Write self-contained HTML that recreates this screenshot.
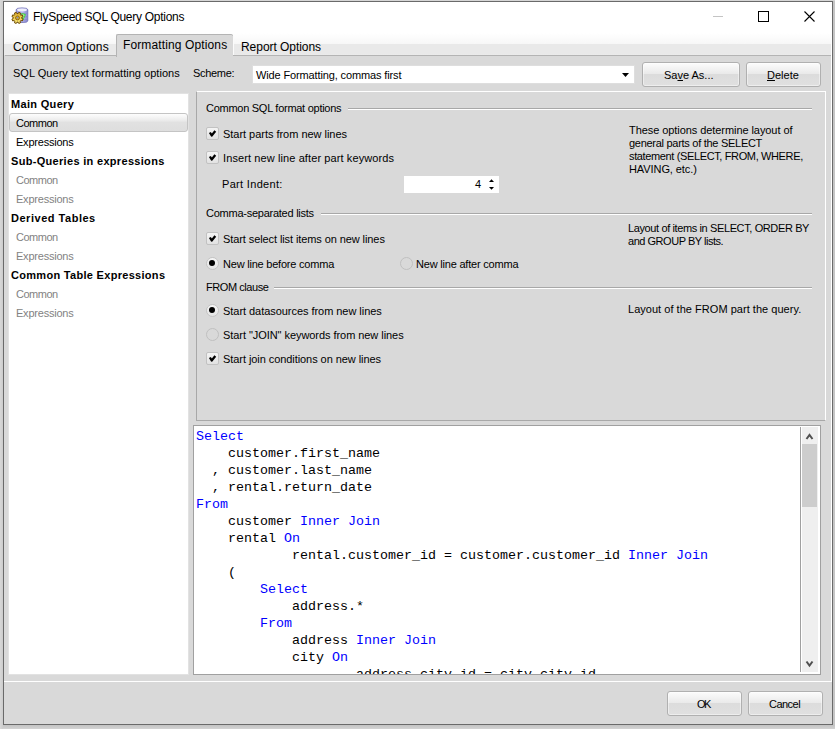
<!DOCTYPE html>
<html><head><meta charset="utf-8">
<style>
*{box-sizing:border-box}
html,body{margin:0;padding:0;width:835px;height:729px;overflow:hidden;background:#c5c5c5}
body{position:relative;font-family:"Liberation Sans",sans-serif;font-size:11px;color:#000}
.a{position:absolute}
.t{position:absolute;white-space:nowrap;font-size:11px;line-height:13px}
.win{position:absolute;left:3px;top:1px;width:830px;height:724px;border:1px solid #6a6a6a;background:#d9d9d9}
.title{position:absolute;left:4px;top:2px;width:828px;height:31px;background:#fff}
.strip{position:absolute;left:4px;top:33px;width:827px;height:22px;background:linear-gradient(#fff 0,#f7f7f7 11px,#e9e9e9 11px,#e9e9e9 21px,#ececec 22px)}
.btn{position:absolute;border:1px solid #b0b0b0;border-radius:3px;background:linear-gradient(#fcfcfc 0%,#eaeaea 46%,#dcdcdc 50%,#e0e0e0 100%);box-shadow:inset 0 0 0 1px rgba(255,255,255,.45)}
.cb{position:absolute;width:13px;height:13px;border:1px solid #c2c2c2;border-radius:2px;background:linear-gradient(#f4f4f4,#e2e2e2)}
.rb{position:absolute;width:13px;height:13px;border:1px solid #c4c4c4;border-radius:50%;background:linear-gradient(#f6f6f6,#e4e4e4)}
.rb.off{background:transparent;border-color:#c0c0c0}
.dis{color:#828282}
.code{position:absolute;font-family:"Liberation Mono",monospace;font-size:13.333px;line-height:17px;white-space:pre;color:#000}
.k{color:#0000ff}
</style></head><body>
<div class="a" style="left:0;top:0;width:3px;height:729px;background:linear-gradient(90deg,#d8d8d8,#cccccc)"></div>
<div class="a" style="left:0;top:0;width:835px;height:1px;background:#d6d6d6"></div>
<div class="a" style="left:3px;top:725px;width:832px;height:4px;background:linear-gradient(#c3c3c3,#d3d3d3)"></div>
<div class="win"></div>
<div class="title"></div>
<!-- outer frame right-side white column -->
<div class="a" style="left:831px;top:2px;width:1px;height:680px;background:#fff"></div>
<div class="strip"></div>
<div class="a" style="left:5px;top:55px;width:826px;height:1px;background:#b4b4b4"></div>

<!-- title icon -->
<svg class="a" style="left:0;top:0" width="30" height="30" viewBox="0 0 30 30">
  <defs><linearGradient id="db" x1="0" x2="1"><stop offset="0" stop-color="#9090d4"/><stop offset=".5" stop-color="#b8b8ec"/><stop offset="1" stop-color="#8a8ad0"/></linearGradient>
  <linearGradient id="gr" x1="0" y1="0" x2="0" y2="1"><stop offset="0" stop-color="#e2b02a"/><stop offset="1" stop-color="#fbea7a"/></linearGradient></defs>
  <path d="M16.2 9.6 Q16.2 7.9 22 7.9 Q27.8 7.9 27.8 9.6 V20.9 Q27.8 22.5 22 22.5 Q16.2 22.5 16.2 20.9Z" fill="url(#db)" stroke="#6a6ab4" stroke-width="0.8"/>
  <ellipse cx="22" cy="10" rx="5" ry="1.4" fill="#eeeefc"/>
  <path d="M16.6 13.6 Q22 15 27.4 13.6 M16.6 16.6 Q22 18 27.4 16.6 M16.6 19.6 Q22 21 27.4 19.6" stroke="#8080c4" stroke-width="0.7" fill="none"/>
  <path d="M21.2 13 Q25 13.2 26 14.6 Q24.6 18 22.4 21.2 Z" fill="#46d246"/>
  <path d="M22 14 Q24 14.2 24.6 15 Q23.8 17 22.8 18.6Z" fill="#a8f0a0"/>
  <path d="M21.76 18.46 L23.05 19.18 L22.33 20.92 L20.91 20.52 L20.12 21.31 L20.52 22.73 L18.78 23.45 L18.06 22.16 L16.94 22.16 L16.22 23.45 L14.48 22.73 L14.88 21.31 L14.09 20.52 L12.67 20.92 L11.95 19.18 L13.24 18.46 L13.24 17.34 L11.95 16.62 L12.67 14.88 L14.09 15.28 L14.88 14.49 L14.48 13.07 L16.22 12.35 L16.94 13.64 L18.06 13.64 L18.78 12.35 L20.52 13.07 L20.12 14.49 L20.91 15.28 L22.33 14.88 L23.05 16.62 L21.76 17.34Z" fill="url(#gr)" stroke="#6a4600" stroke-width="1" stroke-linejoin="miter"/>
  <circle cx="17.5" cy="17.9" r="2" fill="#d0a830" stroke="#8a6410" stroke-width="0.9"/>
  <circle cx="17.5" cy="17.6" r="0.8" fill="#7a86c8"/>
</svg>
<div class="t" style="letter-spacing:-0.272px;left:33px;top:10px;font-size:12px;line-height:15px">FlySpeed SQL Query Options</div>
<!-- caption buttons -->
<div class="a" style="left:713px;top:16px;width:10px;height:1px;background:#c4c4c4"></div>
<div class="a" style="left:758px;top:11px;width:11px;height:11px;border:1px solid #000"></div>
<svg class="a" style="left:803px;top:10px" width="13" height="13" viewBox="0 0 13 13"><path d="M1.5 1.5 L11.5 11.5 M11.5 1.5 L1.5 11.5" stroke="#000" stroke-width="1.1"/></svg>

<!-- tabs -->
<div class="a" style="left:116px;top:34px;width:117px;height:23px;background:#d9d9d9;border:1px solid #b4b4b4;border-bottom:none;border-right:none;border-radius:2px 2px 0 0"></div>
<div class="a" style="left:232px;top:35px;width:1px;height:1px;background:#c4c4c4"></div>
<div class="a" style="left:233px;top:36px;width:1px;height:19px;background:#fbfbfb"></div>
<div class="t" style="letter-spacing:0.177px;left:13px;top:40px;font-size:12px;line-height:15px">Common Options</div>
<div class="t" style="letter-spacing:0.124px;left:123px;top:38px;font-size:12px;line-height:15px">Formatting Options</div>
<div class="t" style="letter-spacing:-0.046px;left:241px;top:40px;font-size:12px;line-height:15px">Report Options</div>

<!-- header row -->
<div class="t" style="letter-spacing:0.025px;left:13px;top:67px">SQL Query text formatting options</div>
<div class="t" style="letter-spacing:-0.300px;left:193px;top:67px">Scheme:</div>
<div class="a" style="left:252px;top:65px;width:383px;height:19px;background:#fff;border:1px solid #dedede"></div>
<div class="t" style="letter-spacing:-0.129px;left:256px;top:69px">Wide Formatting, commas first</div>
<svg class="a" style="left:621px;top:72px" width="9" height="6"><path d="M1 1 H8 L4.5 5Z" fill="#000"/></svg>
<div class="btn" style="left:642px;top:62px;width:98px;height:25px"></div>
<div class="t" style="left:664px;top:69px">Sa<u>v</u>e As...</div>
<div class="btn" style="left:746px;top:62px;width:75px;height:25px"></div>
<div class="t" style="left:767px;top:69px"><u>D</u>elete</div>

<!-- tree panel -->
<div class="a" style="left:8px;top:93px;width:181px;height:582px;background:#fff;border:1px solid #e2e2e2"></div>
<div class="a" style="left:9px;top:113px;width:179px;height:19px;border:1px solid #c4c4c4;border-radius:3px;background:linear-gradient(#fdfdfd 0,#ededed 35%,#e1e1e1 50%,#dedede 100%)"></div>
<div class="t" style="letter-spacing:0.322px;left:11px;top:98px;font-weight:bold">Main Query</div>
<div class="t" style="letter-spacing:-0.500px;left:16px;top:117px">Common</div>
<div class="t" style="letter-spacing:-0.220px;left:16px;top:136px">Expressions</div>
<div class="t" style="letter-spacing:0.312px;left:11px;top:155px;font-weight:bold">Sub-Queries in expressions</div>
<div class="t dis" style="letter-spacing:-0.500px;left:16px;top:174px">Common</div>
<div class="t dis" style="letter-spacing:-0.220px;left:16px;top:193px">Expressions</div>
<div class="t" style="letter-spacing:0.523px;left:11px;top:212px;font-weight:bold">Derived Tables</div>
<div class="t dis" style="letter-spacing:-0.500px;left:16px;top:231px">Common</div>
<div class="t dis" style="letter-spacing:-0.220px;left:16px;top:250px">Expressions</div>
<div class="t" style="letter-spacing:0.300px;left:11px;top:269px;font-weight:bold">Common Table Expressions</div>
<div class="t dis" style="letter-spacing:-0.500px;left:16px;top:288px">Common</div>
<div class="t dis" style="letter-spacing:-0.220px;left:16px;top:307px">Expressions</div>

<!-- options panel -->
<div class="a" style="left:196px;top:91px;width:630px;height:330px;border-top:1px solid #fff;border-right:1px solid #fff;border-left:1px solid #a8a8a8;border-bottom:1px solid #a8a8a8"></div>

<div class="t" style="letter-spacing:-0.271px;left:206px;top:102px">Common SQL format options</div>
<div class="a" style="left:348px;top:108px;width:464px;height:1px;background:#a8a8a8;border-bottom:0"></div>
<div class="a" style="left:348px;top:109px;width:464px;height:1px;background:#fff"></div>

<div class="cb" style="left:206px;top:127px"><svg width="11" height="11" style="position:absolute;left:0;top:0"><polyline points="2.9,4.5 4.7,7.5 8.3,3.1" fill="none" stroke="#000" stroke-width="2.3" stroke-linecap="butt" stroke-linejoin="round"/></svg></div>
<div class="t" style="letter-spacing:-0.028px;left:223px;top:128px">Start parts from new lines</div>
<div class="cb" style="left:206px;top:151px"><svg width="11" height="11" style="position:absolute;left:0;top:0"><polyline points="2.9,4.5 4.7,7.5 8.3,3.1" fill="none" stroke="#000" stroke-width="2.3" stroke-linecap="butt" stroke-linejoin="round"/></svg></div>
<div class="t" style="letter-spacing:0.103px;left:223px;top:152px">Insert new line after part keywords</div>
<div class="t" style="letter-spacing:0.318px;left:222px;top:178px">Part Indent:</div>
<div class="a" style="left:404px;top:176px;width:95px;height:17px;background:#fff"></div>
<div class="t" style="left:475px;top:178px">4</div>
<svg class="a" style="left:488px;top:178px" width="8" height="13"><path d="M1 4 L6 4 L3.5 1.2Z M1 9 L6 9 L3.5 11.8Z" fill="#000"/></svg>

<div class="t" style="letter-spacing:-0.250px;left:206px;top:207px">Comma-separated lists</div>
<div class="a" style="left:321px;top:213px;width:491px;height:1px;background:#a8a8a8"></div>
<div class="a" style="left:321px;top:214px;width:491px;height:1px;background:#fff"></div>
<div class="cb" style="left:206px;top:232px"><svg width="11" height="11" style="position:absolute;left:0;top:0"><polyline points="2.9,4.5 4.7,7.5 8.3,3.1" fill="none" stroke="#000" stroke-width="2.3" stroke-linecap="butt" stroke-linejoin="round"/></svg></div>
<div class="t" style="letter-spacing:-0.091px;left:223px;top:233px">Start select list items on new lines</div>
<div class="rb" style="left:206px;top:257px"><div style="position:absolute;left:2.3px;top:2.3px;width:6px;height:6px;border-radius:50%;background:#000"></div></div>
<div class="t" style="letter-spacing:-0.215px;left:223px;top:258px">New line before comma</div>
<div class="rb off" style="left:400px;top:257px"></div>
<div class="t" style="letter-spacing:-0.200px;left:416px;top:258px">New line after comma</div>

<div class="t" style="letter-spacing:-0.430px;left:206px;top:281px">FROM clause</div>
<div class="a" style="left:274px;top:287px;width:538px;height:1px;background:#a8a8a8"></div>
<div class="a" style="left:274px;top:288px;width:538px;height:1px;background:#fff"></div>
<div class="rb" style="left:206px;top:304px"><div style="position:absolute;left:2.3px;top:2.3px;width:6px;height:6px;border-radius:50%;background:#000"></div></div>
<div class="t" style="letter-spacing:-0.045px;left:223px;top:305px">Start datasources from new lines</div>
<div class="rb off" style="left:206px;top:328px"></div>
<div class="t" style="letter-spacing:-0.057px;left:223px;top:329px">Start "JOIN" keywords from new lines</div>
<div class="cb" style="left:206px;top:352px"><svg width="11" height="11" style="position:absolute;left:0;top:0"><polyline points="2.9,4.5 4.7,7.5 8.3,3.1" fill="none" stroke="#000" stroke-width="2.3" stroke-linecap="butt" stroke-linejoin="round"/></svg></div>
<div class="t" style="letter-spacing:-0.067px;left:223px;top:353px">Start join conditions on new lines</div>

<div class="t" style="letter-spacing:-0.069px;left:629px;top:124px">These options determine layout of</div>
<div class="t" style="letter-spacing:-0.281px;left:629px;top:137px">general parts of the SELECT</div>
<div class="t" style="letter-spacing:-0.367px;left:629px;top:150px">statement (SELECT, FROM, WHERE,</div>
<div class="t" style="letter-spacing:-0.083px;left:629px;top:163px">HAVING, etc.)</div>
<div class="t" style="letter-spacing:-0.382px;left:628px;top:222px">Layout of items in SELECT, ORDER BY</div>
<div class="t" style="letter-spacing:-0.472px;left:628px;top:235px">and GROUP BY lists.</div>
<div class="t" style="letter-spacing:0.030px;left:628px;top:303px">Layout of the FROM part the query.</div>

<!-- code box -->
<div class="a" style="left:193px;top:425px;width:628px;height:250px;background:#fff;border:1px solid #a0a0a0;overflow:hidden">
<div class="code" style="left:2px;top:2px"><span class="k">Select</span>
    customer.first_name
  , customer.last_name
  , rental.return_date
<span class="k">From</span>
    customer <span class="k">Inner Join</span>
    rental <span class="k">On</span>
            rental.customer_id = customer.customer_id <span class="k">Inner Join</span>
    (
        <span class="k">Select</span>
            address.*
        <span class="k">From</span>
            address <span class="k">Inner Join</span>
            city <span class="k">On</span>
                    address.city_id = city.city_id</div>
</div>
<!-- scrollbar -->
<div class="a" style="left:800px;top:427px;width:18px;height:245px;background:#efefef;border-left:1px solid #a0a0a0;box-shadow:inset 1px 0 0 #fff"></div>
<div class="a" style="left:802px;top:444px;width:15px;height:63px;background:#cdcdcd"></div>
<svg class="a" style="left:804px;top:431px" width="12" height="12"><polyline points="2.5,8 5.5,4 8.5,8" fill="none" stroke="#505050" stroke-width="2"/></svg>
<svg class="a" style="left:804px;top:658px" width="12" height="12"><polyline points="2.5,3.5 5.5,7.5 8.5,3.5" fill="none" stroke="#505050" stroke-width="2"/></svg>

<!-- bottom buttons -->
<div class="a" style="left:4px;top:681px;width:827px;height:1px;background:#fff"></div>
<div class="btn" style="left:667px;top:691px;width:75px;height:25px"></div>
<div class="t" style="letter-spacing:-1.500px;left:697px;top:698px">OK</div>
<div class="btn" style="left:748px;top:691px;width:75px;height:25px"></div>
<div class="t" style="letter-spacing:-0.520px;left:769px;top:698px">Cancel</div>
</body></html>
